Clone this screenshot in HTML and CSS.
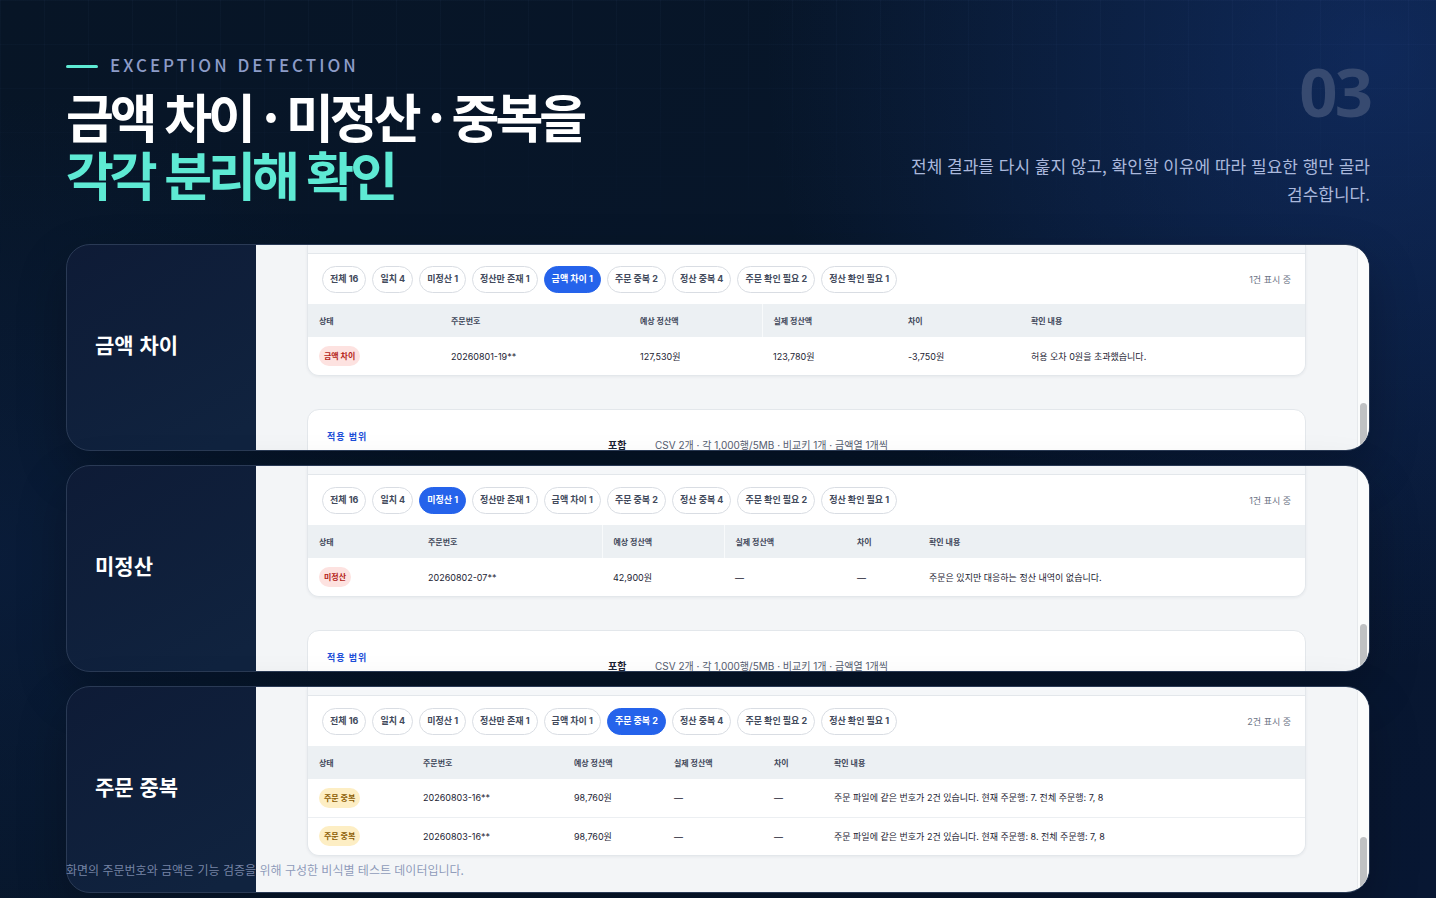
FILE: index.html
```html
<!DOCTYPE html>
<html lang="ko">
<head>
<meta charset="utf-8">
<title>금액 차이 · 미정산 · 중복을 각각 분리해 확인</title>
<link rel="stylesheet" href="styles.css">
</head>
<body>
<main class="slide">
  <header class="head">
    <div class="head-main">
      <p class="eyebrow">EXCEPTION DETECTION</p>
      <h1 class="title">금액 차이 · 미정산 · 중복을<br><em>각각 분리해 확인</em></h1>
    </div>
    <div class="head-side">
      <span class="number">03</span>
      <p class="desc">전체 결과를 다시 훑지 않고, 확인할 이유에 따라 필요한 행만 골라 검수합니다.</p>
    </div>
  </header>

  <div class="cards">
    <section class="card">
      <h2 class="card-label">금액 차이</h2>
      <div class="shot">
        <div class="page">
          <div class="panel results">
            <div class="toolbar">
              <div class="chips">
                <button class="chip">전체 16</button><button class="chip">일치 4</button><button class="chip">미정산 1</button><button class="chip">정산만 존재 1</button><button class="chip active">금액 차이 1</button><button class="chip">주문 중복 2</button><button class="chip">정산 중복 4</button><button class="chip">주문 확인 필요 2</button><button class="chip">정산 확인 필요 1</button>
              </div>
              <span class="count">1건 표시 중</span>
            </div>
            <table class="grid diff">
              <colgroup><col class="c1"><col class="c2"><col class="c3"><col class="c4"><col class="c5"><col></colgroup>
              <thead><tr><th>상태</th><th>주문번호</th><th class="ruled">예상 정산액</th><th>실제 정산액</th><th>차이</th><th>확인 내용</th></tr></thead>
              <tbody>
                <tr><td><span class="badge red">금액 차이</span></td><td>20260801-19**</td><td>127,530원</td><td>123,780원</td><td>-3,750원</td><td>허용 오차 0원을 초과했습니다.</td></tr>
              </tbody>
            </table>
          </div>
          <div class="panel scope">
            <div class="scope-head"><p class="scope-tag">적용 범위</p></div>
            <dl class="scope-list"><dt>포함</dt><dd>CSV 2개 · 각 1,000행/5MB · 비교키 1개 · 금액열 1개씩</dd></dl>
          </div>
        </div>
        <div class="track"><div class="thumb"></div></div>
      </div>
    </section>

    <section class="card">
      <h2 class="card-label">미정산</h2>
      <div class="shot">
        <div class="page">
          <div class="panel results">
            <div class="toolbar">
              <div class="chips">
                <button class="chip">전체 16</button><button class="chip">일치 4</button><button class="chip active">미정산 1</button><button class="chip">정산만 존재 1</button><button class="chip">금액 차이 1</button><button class="chip">주문 중복 2</button><button class="chip">정산 중복 4</button><button class="chip">주문 확인 필요 2</button><button class="chip">정산 확인 필요 1</button>
              </div>
              <span class="count">1건 표시 중</span>
            </div>
            <table class="grid unsettled">
              <colgroup><col class="c1"><col class="c2"><col class="c3"><col class="c4"><col class="c5"><col></colgroup>
              <thead><tr><th>상태</th><th class="ruled">주문번호</th><th class="ruled">예상 정산액</th><th>실제 정산액</th><th>차이</th><th>확인 내용</th></tr></thead>
              <tbody>
                <tr><td><span class="badge red">미정산</span></td><td>20260802-07**</td><td>42,900원</td><td>—</td><td>—</td><td>주문은 있지만 대응하는 정산 내역이 없습니다.</td></tr>
              </tbody>
            </table>
          </div>
          <div class="panel scope">
            <div class="scope-head"><p class="scope-tag">적용 범위</p></div>
            <dl class="scope-list"><dt>포함</dt><dd>CSV 2개 · 각 1,000행/5MB · 비교키 1개 · 금액열 1개씩</dd></dl>
          </div>
        </div>
        <div class="track"><div class="thumb"></div></div>
      </div>
    </section>

    <section class="card">
      <h2 class="card-label">주문 중복</h2>
      <div class="shot">
        <div class="page">
          <div class="panel results">
            <div class="toolbar">
              <div class="chips">
                <button class="chip">전체 16</button><button class="chip">일치 4</button><button class="chip">미정산 1</button><button class="chip">정산만 존재 1</button><button class="chip">금액 차이 1</button><button class="chip active">주문 중복 2</button><button class="chip">정산 중복 4</button><button class="chip">주문 확인 필요 2</button><button class="chip">정산 확인 필요 1</button>
              </div>
              <span class="count">2건 표시 중</span>
            </div>
            <table class="grid duplicate">
              <colgroup><col class="c1"><col class="c2"><col class="c3"><col class="c4"><col class="c5"><col></colgroup>
              <thead><tr><th>상태</th><th>주문번호</th><th>예상 정산액</th><th>실제 정산액</th><th>차이</th><th>확인 내용</th></tr></thead>
              <tbody>
                <tr><td><span class="badge amber">주문 중복</span></td><td>20260803-16**</td><td>98,760원</td><td>—</td><td>—</td><td>주문 파일에 같은 번호가 2건 있습니다. 현재 주문행: 7. 전체 주문행: 7, 8</td></tr>
                <tr><td><span class="badge amber">주문 중복</span></td><td>20260803-16**</td><td>98,760원</td><td>—</td><td>—</td><td>주문 파일에 같은 번호가 2건 있습니다. 현재 주문행: 8. 전체 주문행: 7, 8</td></tr>
              </tbody>
            </table>
          </div>
        </div>
        <div class="track"><div class="thumb low"></div></div>
      </div>
    </section>
  </div>
  <p class="note">화면의 주문번호와 금액은 기능 검증을 위해 구성한 비식별 테스트 데이터입니다.</p>
</main>
</body>
</html>
```
FILE: styles.css
```css
* { box-sizing: border-box; }
body, h1, h2, p, dl, dd { margin: 0; }
body {
  background: #061325;
  color: #fff;
  font-family: "Noto Sans CJK KR", sans-serif;
}
.slide {
  position: relative;
  height: 100vh;
  overflow: hidden;
  padding: 50px 66px 0;
  background:
    radial-gradient(circle at 96% 6%, rgba(30, 74, 170, 0.36), transparent 38%),
    radial-gradient(circle at 0% 62%, rgba(16, 46, 104, 0.26), transparent 30%),
    linear-gradient(135deg, #071526 0%, #07162a 50%, #081733 100%);
}
.slide::before {
  content: "";
  position: absolute;
  inset: 0;
  background:
    linear-gradient(rgba(148, 180, 255, 0.03) 1px, transparent 1px) 0 0 / 44px 44px,
    linear-gradient(90deg, rgba(148, 180, 255, 0.03) 1px, transparent 1px) 0 0 / 44px 44px;
  -webkit-mask-image: linear-gradient(#000, transparent 30%);
  mask-image: linear-gradient(#000, transparent 30%);
}
.head {
  position: relative;
  display: flex;
  justify-content: space-between;
  height: 194px;
}
.eyebrow {
  display: flex;
  align-items: center;
  gap: 12px;
  height: 28px;
  color: #8d9cc8;
  font-size: 17px;
  font-weight: 500;
  letter-spacing: 3px;
}
.eyebrow::before {
  content: "";
  width: 32px;
  height: 3px;
  margin-top: 5px;
  border-radius: 2px;
  background: #5eead4;
}
.title {
  margin-top: 9px;
  font-size: 52px;
  font-weight: 700;
  line-height: 58px;
  letter-spacing: -4px;
}
.title em { color: #5eead4; font-style: normal; }
.head-side {
  display: flex;
  flex-direction: column;
  align-items: flex-end;
  width: 460px;
  text-align: right;
}
.number {
  height: 102px;
  color: #374a70;
  font-family: "Noto Sans", sans-serif;
  font-size: 67px;
  font-weight: 700;
  line-height: 82px;
  letter-spacing: -3px;
}
.desc {
  color: #aab8dc;
  font-size: 17px;
  line-height: 28px;
}
.cards { position: relative; display: grid; gap: 14px; }
.card {
  display: grid;
  grid-template-columns: 189px 1fr;
  height: 207px;
  overflow: hidden;
  border: 1px solid #2a3a55;
  border-radius: 24px;
  background: linear-gradient(150deg, #0e1b36, #10233f 30%);
  box-shadow: 0 20px 50px rgba(0, 0, 0, 0.24);
}
.card-label {
  align-self: center;
  padding: 0 0 8px 28px;
  font-size: 21px;
  font-weight: 700;
  line-height: 30px;
}
.shot {
  display: flex;
  min-width: 0;
  overflow: hidden;
  background: #f3f5f7;
  color: #1c2333;
  font-family: Inter, "Noto Sans CJK KR", sans-serif;
}
.page { flex: 1; min-width: 0; padding: 0 51px; }
.panel { border: 1px solid #e3e7eb; background: #fff; }
.results {
  overflow: hidden;
  padding-top: 8px;
  border-top: 0;
  border-radius: 0 0 12px 12px;
  background: linear-gradient(#f5f7f9 8px, #fff 8px);
  box-shadow: 0 1px 3px rgba(20, 30, 50, 0.06);
}
.toolbar {
  display: flex;
  justify-content: space-between;
  align-items: center;
  height: 51px;
  padding: 0 14px;
  border-top: 1px solid #e3e7eb;
}
.chips { display: flex; gap: 6px; }
.chip {
  height: 27px;
  padding: 0 7px;
  border: 1px solid #d9dde3;
  border-radius: 14px;
  background: #fff;
  color: #424a5c;
  font-family: inherit;
  font-size: 9px;
  font-weight: 700;
  line-height: 14px;
  white-space: nowrap;
}
.chip.active { border-color: #2563eb; background: #2563eb; color: #fff; }
.count { color: #6b7385; font-size: 9px; }
.grid { width: 100%; border-collapse: collapse; table-layout: fixed; }
.grid th, .grid td {
  padding: 0 0 0 11px;
  text-align: left;
  white-space: nowrap;
}
.grid th {
  height: 33px;
  background: #ecf0f3;
  color: #3f475a;
  font-size: 8px;
  font-weight: 700;
}
.grid th.ruled { border-right: 1px solid #f8fafb; }
.grid td { height: 38px; font-size: 9px; }
.grid tr + tr td { border-top: 1px solid #eceff2; }
.diff .c1 { width: 132px; }
.diff .c2 { width: 189px; }
.diff .c3 { width: 133px; }
.diff .c4 { width: 135px; }
.diff .c5 { width: 123px; }
.unsettled .c1 { width: 109px; }
.unsettled .c2 { width: 185px; }
.unsettled .c3 { width: 122px; }
.unsettled .c4 { width: 122px; }
.unsettled .c5 { width: 72px; }
.duplicate .c1 { width: 104px; }
.duplicate .c2 { width: 151px; }
.duplicate .c3 { width: 100px; }
.duplicate .c4 { width: 100px; }
.duplicate .c5 { width: 60px; }
.badge {
  display: inline-block;
  padding: 0 5px;
  border-radius: 10px;
  font-size: 8px;
  font-weight: 700;
  line-height: 20px;
}
.badge.red { background: #fde2e0; color: #b42318; }
.badge.amber { background: #fdeec4; color: #8a5a00; }
.scope {
  display: grid;
  grid-template-columns: 281px 1fr;
  height: 120px;
  margin-top: 33px;
  padding: 19px;
  border-radius: 12px;
}
.scope-tag {
  color: #1d4ed8;
  font-size: 9px;
  font-weight: 700;
  line-height: 16px;
  letter-spacing: 1px;
}
.scope-list {
  display: grid;
  grid-template-columns: 47px 1fr;
  align-content: start;
  padding-top: 8px;
  font-size: 10px;
  line-height: 16px;
}
.scope-list dt { font-weight: 700; }
.scope-list dd { color: #555d70; }
.track {
  display: flex;
  width: 12px;
  padding: 158px 2px 0;
  border-left: 1px solid #e6e9ec;
  background: #fbfcfc;
}
.thumb {
  width: 7px;
  height: 80px;
  border-radius: 4px;
  background: #bfc1c3;
}
.thumb.low { margin-top: -8px; }
.note {
  position: absolute;
  left: 66px;
  bottom: 18px;
  color: rgba(130, 144, 178, 0.9);
  font-size: 12px;
  line-height: 20px;
}
```
